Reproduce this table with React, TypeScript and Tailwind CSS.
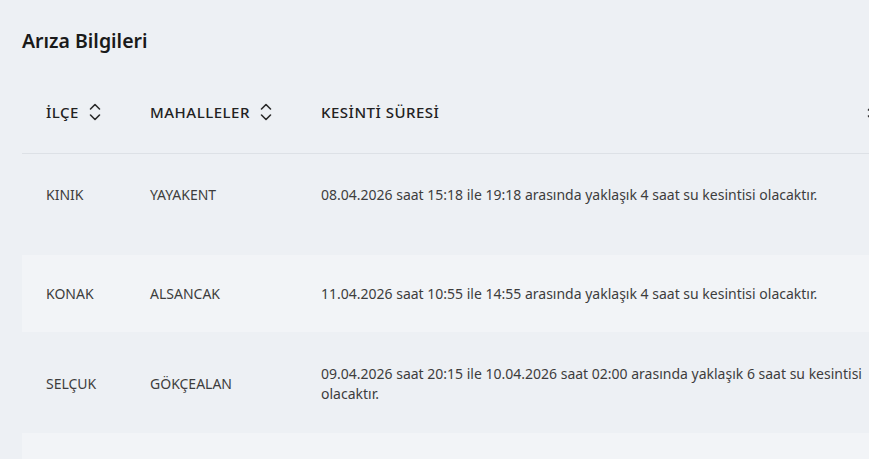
import React from "react";

const SortIcon = () => (
  <svg width="14" height="18" viewBox="0 0 14 18" fill="none" stroke="#2a2a2a" strokeWidth="1.6" strokeLinecap="round" strokeLinejoin="round" className="inline-block">
    <path d="M2.5 6 7 1.5 11.5 6" />
    <path d="M2.5 12 7 16.5 11.5 12" />
  </svg>
);

const rows = [
  { ilce: "KINIK", mah: "YAYAKENT", text: "08.04.2026 saat 15:18 ile 19:18 arasında yaklaşık 4 saat su kesintisi olacaktır.", h: "h-[102px]", align: "align-top pt-[31px]", bg: "" },
  { ilce: "KONAK", mah: "ALSANCAK", text: "11.04.2026 saat 10:55 ile 14:55 arasında yaklaşık 4 saat su kesintisi olacaktır.", h: "h-[77px]", align: "align-middle", bg: "bg-[#f2f4f7]" },
  { ilce: "SELÇUK", mah: "GÖKÇEALAN", text: "09.04.2026 saat 20:15 ile 10.04.2026 saat 02:00 arasında yaklaşık 6 saat su kesintisi olacaktır.", h: "h-[101px]", align: "align-middle pt-[2px]", bg: "" },
  { ilce: "", mah: "", text: "", h: "h-[60px]", align: "align-middle", bg: "bg-[#f2f4f7]" },
];

export default function App() {
  return (
    <div className="w-[869px] h-[459px] overflow-hidden bg-[#edf0f4]" style={{ fontFamily: "'Noto Sans', sans-serif" }}>
      <div className="pl-[22px] pt-[28px]">
        <h2 className="text-[19.5px] leading-[26px] font-semibold text-[#1a1a1a]">Arıza Bilgileri</h2>
        <table className="mt-[21px] border-collapse table-fixed w-[900px]">
          <colgroup>
            <col className="w-[104px]" />
            <col className="w-[171px]" />
            <col className="w-[569px]" />
            <col className="w-[56px]" />
          </colgroup>
          <thead>
            <tr className="h-[78px] border-b border-[#dde1e6]">
              <th className="pl-[24px] pb-[4px] text-left font-medium text-[15px] tracking-[0.5px] text-[#222] align-middle">
                <span className="inline-flex items-center gap-[9px]">İLÇE <SortIcon /></span>
              </th>
              <th className="pl-[24px] pb-[4px] text-left font-medium text-[15px] tracking-[0.5px] text-[#222] align-middle">
                <span className="inline-flex items-center gap-[9px]">MAHALLELER <SortIcon /></span>
              </th>
              <th className="pl-[24px] pb-[4px] text-left font-medium text-[15px] tracking-[0.5px] text-[#222] align-middle">KESİNTİ SÜRESİ</th>
              <th className="pl-0 pb-[4px] text-left align-middle">
                <SortIcon />
              </th>
            </tr>
          </thead>
          <tbody>
            {rows.map((r, i) => (
              <tr key={i} className={`${r.h} ${r.bg}`}>
                <td className={`pl-[24px] text-[14px] leading-[20px] text-[#3d3d3d] ${r.align}`}>{r.ilce}</td>
                <td className={`pl-[24px] text-[14px] leading-[20px] text-[#3d3d3d] ${r.align}`}>{r.mah}</td>
                <td className={`pl-[24px] text-[14px] leading-[20px] text-[#3d3d3d] ${r.align}`}>{r.text}</td>
                <td></td>
              </tr>
            ))}
          </tbody>
        </table>
      </div>
    </div>
  );
}
